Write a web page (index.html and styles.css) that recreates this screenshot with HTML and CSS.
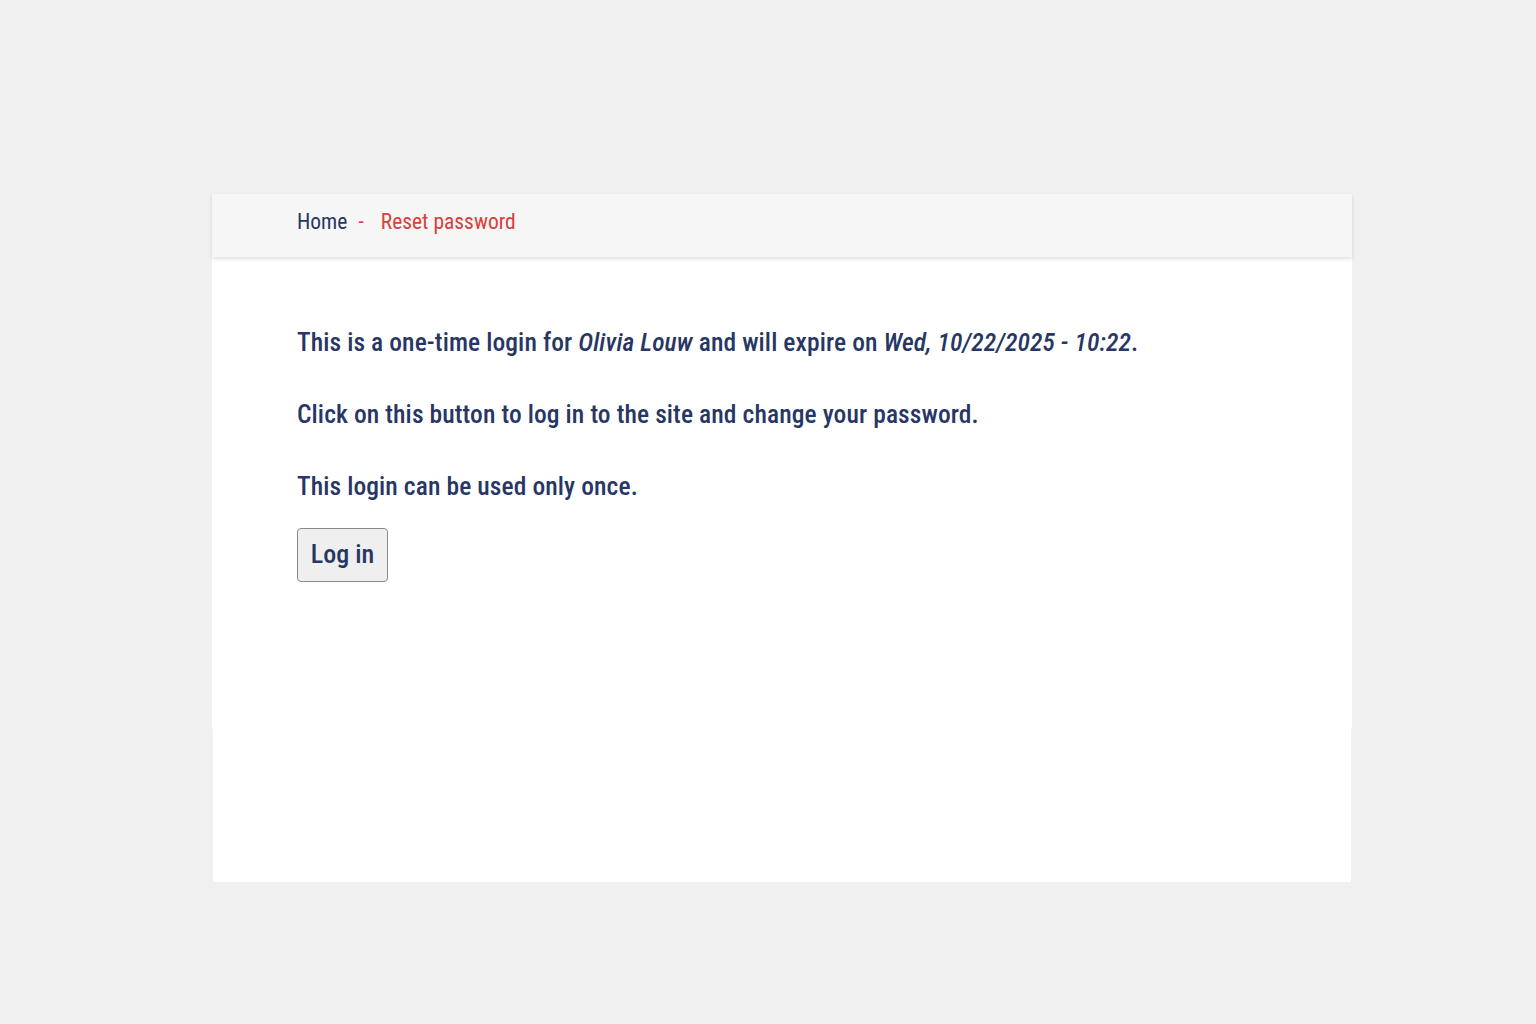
FILE: index.html
```html
<!DOCTYPE html>
<html lang="en">
<head>
<meta charset="utf-8">
<title>Reset password</title>
<link rel="stylesheet" href="styles.css">
</head>
<body>
<div class="page">
  <nav class="breadcrumb">
    <a class="crumb-home" href="#">Home</a>
    <span class="sep">-</span>
    <span class="crumb-current">Reset password</span>
  </nav>
  <main class="content">
    <p>This is a one-time login for <em>Olivia Louw</em> and will expire on <em>Wed, 10/22/2025 - 10:22</em>.</p>
    <p>Click on this button to log in to the site and change your password.</p>
    <p>This login can be used only once.</p>
    <button class="btn" type="button">Log in</button>
  </main>
  <div class="lower"></div>
</div>
</body>
</html>
```
FILE: styles.css
```css
html, body {
  margin: 0;
  padding: 0;
}
body {
  background: #eff0ef;
  font-family: "Roboto", "Open Sans", sans-serif;
  font-stretch: 75%;
  font-weight: 500;
  color: #283664;
}
.page {
  width: 1140px;
  margin-left: 212px;
  padding-top: 194px;
}
.breadcrumb {
  height: 63px;
  background: #f6f6f6;
  box-shadow: 0 2px 4px rgba(0,0,0,0.12);
  display: flex;
  align-items: center;
  padding-left: 85px;
  padding-bottom: 8px;
  box-sizing: border-box;
  font-size: 21.5px;
  font-weight: 400;
  position: relative;
  z-index: 1;
}
.crumb-home {
  color: #283664;
  text-decoration: none;
}
.sep {
  color: #d9403a;
  margin: 0 17px 0 11px;
}
.crumb-current {
  color: #d9403a;
}
.content {
  background: #fff;
  height: 472px;
  padding: 69px 85px 0;
  box-sizing: border-box;
  font-size: 25.5px;
  letter-spacing: 0.1px;
}
.lower {
  background: #fff;
  height: 153px;
  margin: 0 1px;
}
.content p {
  margin: 0 0 40px;
  line-height: 32px;
}
.content p:last-of-type {
  margin-bottom: 26px;
}
.content em {
  font-style: italic;
}
.btn {
  display: block;
  width: 91px;
  height: 54px;
  font-family: inherit;
  font-stretch: 75%;
  font-weight: 500;
  font-size: 26px;
  letter-spacing: 0;
  color: #283664;
  background: #efefef;
  border: 1.5px solid #8a8a8a;
  border-radius: 4px;
  padding: 0 0 3px;
}
```
